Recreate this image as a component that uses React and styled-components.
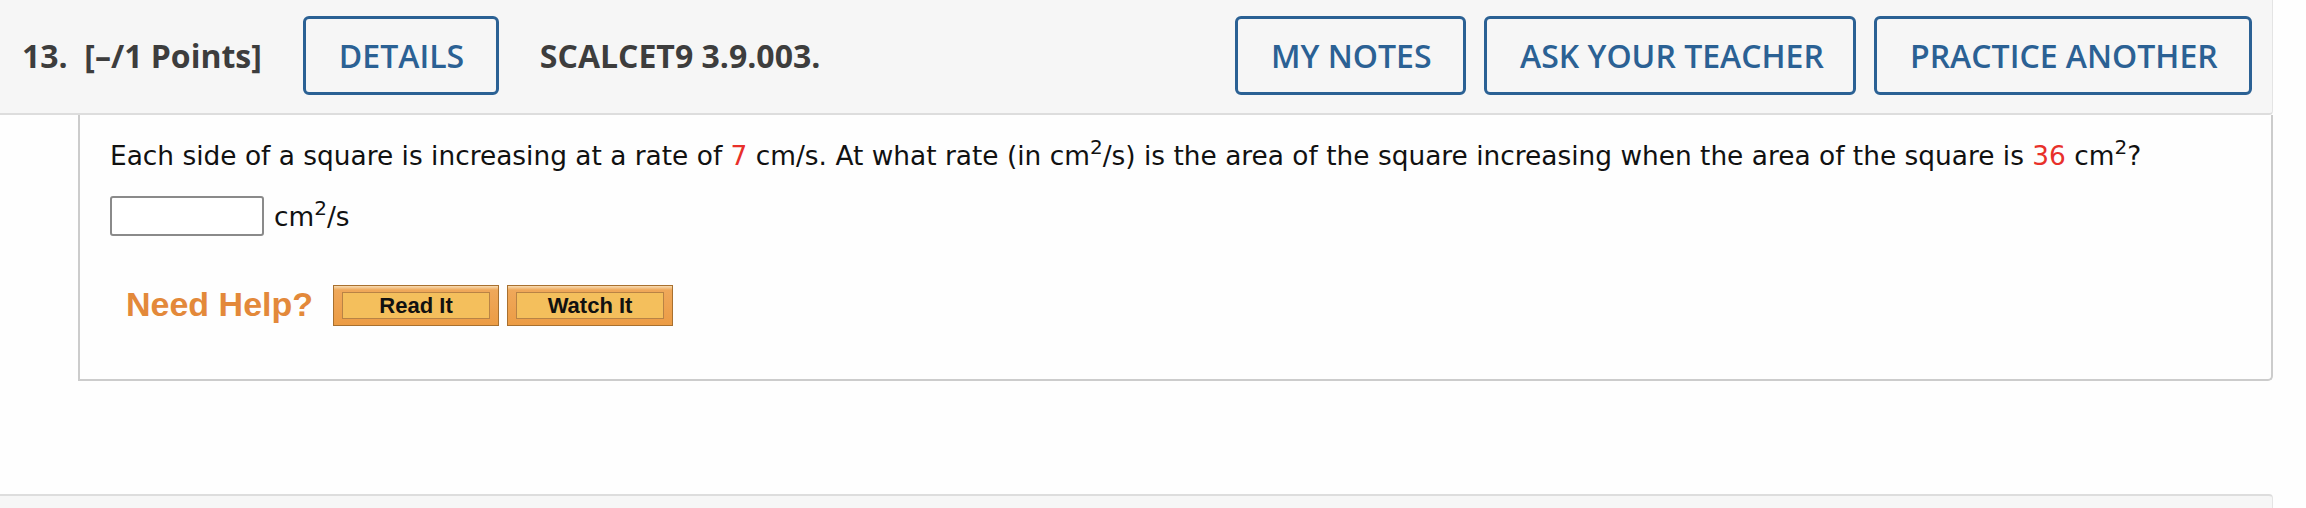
import React from "react";
import styled, { createGlobalStyle } from "styled-components";

const GlobalStyle = createGlobalStyle`
  html, body {
    margin: 0;
    padding: 0;
    background: #fefefe;
  }
`;

const Page = styled.div`
  width: 2273px;
`;

const QuestionHeader = styled.div`
  display: flex;
  align-items: center;
  height: 115px;
  padding: 0 20px 2px 22px;
  box-sizing: border-box;
  background: #f6f6f6;
  border-bottom: 2px solid #dddddd;
  border-right: 1px solid #e4e4e4;
  border-radius: 0 0 4px 0;
  font-family: "Open Sans", sans-serif;
`;

const HeaderLabel = styled.span`
  font-size: 32px;
  font-weight: 700;
  color: #3d3d3d;
  white-space: pre;
  margin-right: ${(p) => p.$gap || 0}px;
`;

const OutlineButton = styled.button`
  height: 79px;
  padding: 0 33px;
  margin-right: ${(p) => p.$gap || 0}px;
  background: transparent;
  border: 3px solid #2b6194;
  border-radius: 6px;
  font-family: "Open Sans", sans-serif;
  font-size: 32px;
  font-weight: 600;
  color: #2b6194;
  white-space: nowrap;
  cursor: pointer;
  width: ${(p) => p.$width}px;
`;

const ButtonGroup = styled.div`
  display: flex;
  gap: 18px;
  margin-left: auto;
`;

const QuestionBody = styled.div`
  margin-left: 78px;
  height: 266px;
  box-sizing: border-box;
  padding: 23px 30px 0 30px;
  border: 2px solid #cccccc;
  border-top: none;
  border-radius: 0 0 5px 0;
  font-family: Verdana, "DejaVu Sans", sans-serif;
  font-size: 26.4px;
  color: #111;
`;

const Prompt = styled.p`
  margin: 0;
  line-height: 36px;
  white-space: nowrap;
`;

const Red = styled.span`
  color: #e8302a;
`;

const Sup = styled.sup`
  font-size: 20px;
  line-height: 0;
  vertical-align: 11px;
`;

const AnswerRow = styled.div`
  display: flex;
  align-items: center;
  gap: 10px;
  height: 40px;
  margin-top: 22px;
`;

const AnswerInput = styled.input`
  width: 154px;
  height: 40px;
  box-sizing: border-box;
  border: 2px solid #8a8a8a;
  border-radius: 3px;
  background: #fff;
`;

const HelpRow = styled.div`
  display: flex;
  align-items: center;
  margin-top: 49px;
  padding-left: 16px;
`;

const NeedHelp = styled.span`
  font-family: "Liberation Sans", Arial, sans-serif;
  font-weight: 700;
  font-size: 34px;
  color: #e3893a;
  margin-right: 20px;
  margin-top: -2px;
`;

const HelpButton = styled.button`
  width: 166px;
  height: 41px;
  padding: 6px 8px;
  margin-right: 8px;
  box-sizing: border-box;
  border: 1px solid #a8702f;
  background: linear-gradient(#f7dcb4 0, #efa85a 4px, #ec9c45 100%);
  cursor: pointer;
`;

const HelpInner = styled.span`
  display: flex;
  align-items: center;
  justify-content: center;
  height: 100%;
  box-sizing: border-box;
  border: 1px solid #b98345;
  background: #f4bf5c;
  font-family: "Liberation Sans", Arial, sans-serif;
  font-weight: 700;
  font-size: 22px;
  color: #111;
`;

const NextHeader = styled.div`
  margin-top: 113px;
  height: 14px;
  background: #f6f6f6;
  border-top: 2px solid #dddddd;
  border-right: 1px solid #e4e4e4;
  border-radius: 0 4px 0 0;
`;

export default function App() {
  return (
    <Page>
      <GlobalStyle />
      <QuestionHeader>
        <HeaderLabel $gap={41}>13.  [–/1 Points]</HeaderLabel>
        <OutlineButton $width={196} $gap={41}>
          DETAILS
        </OutlineButton>
        <HeaderLabel>SCALCET9 3.9.003.</HeaderLabel>
        <ButtonGroup>
          <OutlineButton $width={231}>MY NOTES</OutlineButton>
          <OutlineButton $width={372}>ASK YOUR TEACHER</OutlineButton>
          <OutlineButton $width={378}>PRACTICE ANOTHER</OutlineButton>
        </ButtonGroup>
      </QuestionHeader>
      <QuestionBody>
        <Prompt>
          Each side of a square is increasing at a rate of <Red>7</Red> cm/s.
          At what rate (in cm<Sup>2</Sup>/s) is the area of the square
          increasing when the area of the square is <Red>36</Red> cm<Sup>2</Sup>?
        </Prompt>
        <AnswerRow>
          <AnswerInput type="text" />
          <span>
            cm<Sup>2</Sup>/s
          </span>
        </AnswerRow>
        <HelpRow>
          <NeedHelp>Need Help?</NeedHelp>
          <HelpButton>
            <HelpInner>Read It</HelpInner>
          </HelpButton>
          <HelpButton>
            <HelpInner>Watch It</HelpInner>
          </HelpButton>
        </HelpRow>
      </QuestionBody>
      <NextHeader />
    </Page>
  );
}
